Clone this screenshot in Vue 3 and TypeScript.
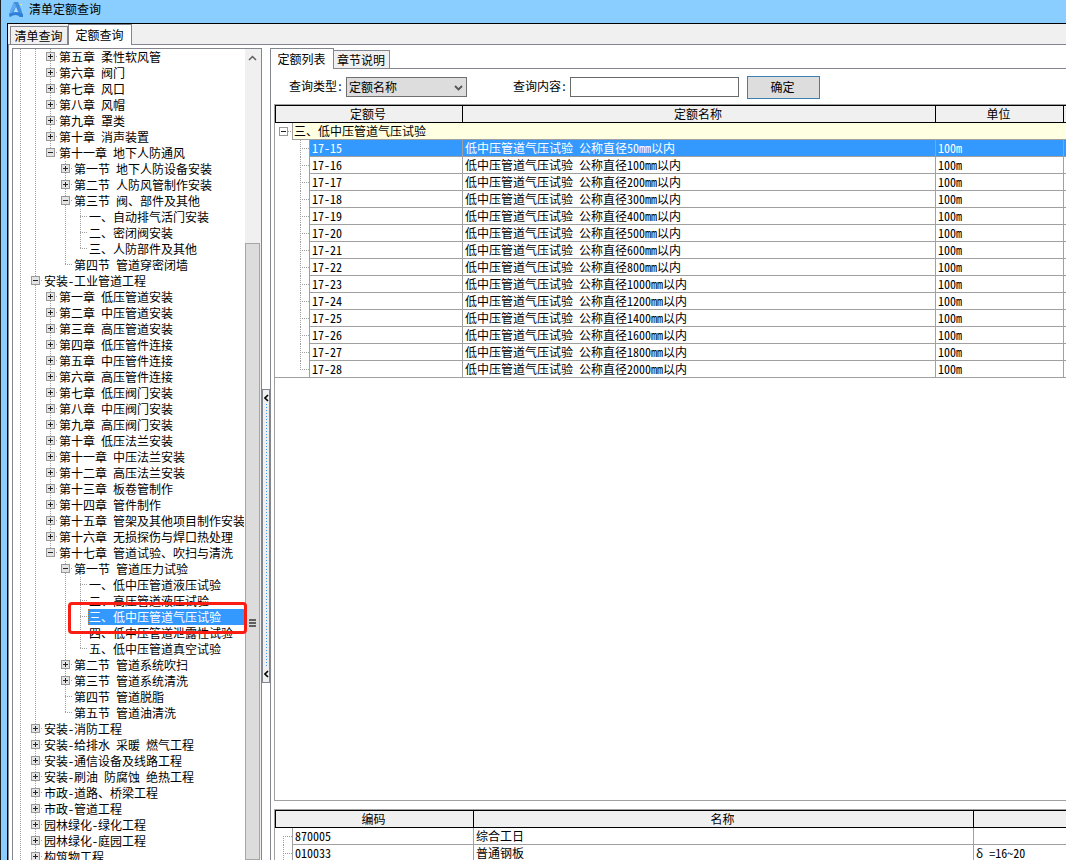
<script setup lang="ts">
import { computed, ref } from 'vue'

type Kind = 'open' | 'closed' | 'leaf'
interface Node { depth: number; text: string; kind: Kind }

const n = (depth: number, text: string, kind: Kind = 'closed'): Node => ({ depth, text, kind })

const nodes: Node[] = [
  n(2, '第五章 柔性软风管'),
  n(2, '第六章 阀门'),
  n(2, '第七章 风口'),
  n(2, '第八章 风帽'),
  n(2, '第九章 罩类'),
  n(2, '第十章 消声装置'),
  n(2, '第十一章 地下人防通风', 'open'),
  n(3, '第一节 地下人防设备安装'),
  n(3, '第二节 人防风管制作安装'),
  n(3, '第三节 阀、部件及其他', 'open'),
  n(4, '一、自动排气活门安装', 'leaf'),
  n(4, '二、密闭阀安装', 'leaf'),
  n(4, '三、人防部件及其他', 'leaf'),
  n(3, '第四节 管道穿密闭墙', 'leaf'),
  n(1, '安装-工业管道工程', 'open'),
  n(2, '第一章 低压管道安装'),
  n(2, '第二章 中压管道安装'),
  n(2, '第三章 高压管道安装'),
  n(2, '第四章 低压管件连接'),
  n(2, '第五章 中压管件连接'),
  n(2, '第六章 高压管件连接'),
  n(2, '第七章 低压阀门安装'),
  n(2, '第八章 中压阀门安装'),
  n(2, '第九章 高压阀门安装'),
  n(2, '第十章 低压法兰安装'),
  n(2, '第十一章 中压法兰安装'),
  n(2, '第十二章 高压法兰安装'),
  n(2, '第十三章 板卷管制作'),
  n(2, '第十四章 管件制作'),
  n(2, '第十五章 管架及其他项目制作安装'),
  n(2, '第十六章 无损探伤与焊口热处理'),
  n(2, '第十七章 管道试验、吹扫与清洗', 'open'),
  n(3, '第一节 管道压力试验', 'open'),
  n(4, '一、低中压管道液压试验', 'leaf'),
  n(4, '二、高压管道液压试验', 'leaf'),
  n(4, '三、低中压管道气压试验', 'leaf'),
  n(4, '四、低中压管道泄露性试验', 'leaf'),
  n(4, '五、低中压管道真空试验', 'leaf'),
  n(3, '第二节 管道系统吹扫'),
  n(3, '第三节 管道系统清洗'),
  n(3, '第四节 管道脱脂', 'leaf'),
  n(3, '第五节 管道油清洗', 'leaf'),
  n(1, '安装-消防工程'),
  n(1, '安装-给排水 采暖 燃气工程'),
  n(1, '安装-通信设备及线路工程'),
  n(1, '安装-刷油 防腐蚀 绝热工程'),
  n(1, '市政-道路、桥梁工程'),
  n(1, '市政-管道工程'),
  n(1, '园林绿化-绿化工程'),
  n(1, '园林绿化-庭园工程'),
  n(1, '构筑物工程'),
]

/* True when a later sibling exists at the given depth; the two outer levels run past the list's end. */
function continues(index: number, depth: number): boolean {
  if (depth <= 1) return true
  for (let i = index + 1; i < nodes.length; i++) {
    if (nodes[i].depth < depth) return false
    if (nodes[i].depth === depth) return true
  }
  return false
}

const tree = computed(() =>
  nodes.map((node, i) => ({
    ...node,
    guides: Array.from({ length: node.depth }, (_, d) => continues(i, d)),
    more: continues(i, node.depth),
  })),
)

const selectedNode = ref(35)
const selectedRow = ref(0)
const queryType = ref('定额名称')
const queryText = ref('')

const diameters = [50, 100, 200, 300, 400, 500, 600, 800, 1000, 1200, 1400, 1600, 1800, 2000]
const quotas = diameters.map((d, i) => ({
  code: `17-${15 + i}`,
  name: `低中压管道气压试验 公称直径${d}mm以内`,
  unit: '100m',
}))

const materials = [
  { code: '870005', name: '综合工日', spec: '' },
  { code: '010033', name: '普通钢板', spec: 'δ =16~20' },
]
</script>

<template>
  <div class="window">
    <header class="titlebar">
      <svg class="logo" viewBox="0 0 16 17" aria-hidden="true">
        <path d="M6 1 L10 1 L13 8 L15 15 L12 15 L8 6 L5 12 L2 16 L1 14 L3 8 Z" fill="#3f8ee0" />
        <path d="M6 1 L8 5 L4 12 L1 15 L3 8 Z" fill="#62aaf0" />
        <path d="M8 6 L10 12 L6 12 Z" fill="#b4deff" />
        <path d="M1 13 Q8 9 15 13 L15 16 L12 16 Q8 12 2 16 Z" fill="#2f7fd6" />
        <path d="M12 3 h2 v1 h-2z M13 4 h1 v1 h-1z" fill="#e9e36b" />
      </svg>
      <h1>清单定额查询</h1>
    </header>

    <div class="client">
      <div class="tabs outer" role="tablist">
        <button type="button" role="tab" class="tab" aria-selected="false">清单查询</button>
        <button type="button" role="tab" class="tab on" aria-selected="true">定额查询</button>
      </div>

      <main class="pane">
        <nav class="treebox" aria-label="定额章节">
          <ul class="tree">
            <li v-for="(node, i) in tree" :key="i" class="node">
              <span v-for="(line, d) in node.guides" :key="d" class="guide" :class="{ line }"></span>
              <span class="guide joint" :class="{ last: !node.more }">
                <button
                  v-if="node.kind !== 'leaf'"
                  type="button"
                  class="expander"
                  :class="node.kind"
                  :aria-label="node.text"
                  :aria-expanded="node.kind === 'open'"
                ></button>
              </span>
              <button type="button" class="label" :class="{ selected: i === selectedNode }" @click="selectedNode = i">
                {{ node.text }}
              </button>
              <span v-if="i === 35" class="mark"></span>
            </li>
          </ul>
          <div class="scrollbar">
            <button type="button" class="up" aria-label="向上">
              <svg viewBox="0 0 9 6" aria-hidden="true"><path d="M1 5 L4.500 1.500 L8 5" fill="none" stroke="#606060" stroke-width="1.500" /></svg>
            </button>
            <div class="thumb"><span class="grip"></span></div>
          </div>
        </nav>

        <div class="splitter">
          <div class="handle">
            <svg viewBox="0 0 5 8" aria-hidden="true"><path d="M4 1 L1 4 L4 7" fill="none" stroke="#000" stroke-width="1.600" /></svg>
            <span class="dots"></span>
            <svg viewBox="0 0 5 8" aria-hidden="true"><path d="M4 1 L1 4 L4 7" fill="none" stroke="#000" stroke-width="1.600" /></svg>
          </div>
        </div>

        <section class="right">
          <div class="tabs inner" role="tablist">
            <button type="button" role="tab" class="tab on" aria-selected="true">定额列表</button>
            <button type="button" role="tab" class="tab" aria-selected="false">章节说明</button>
          </div>

          <div class="content">
            <form class="query" @submit.prevent>
              <label for="qtype">查询类型:</label>
              <span class="combo">
                <select id="qtype" v-model="queryType">
                  <option>定额名称</option>
                  <option>定额号</option>
                </select>
                <svg viewBox="0 0 9 6" aria-hidden="true"><path d="M1 1 L4.500 4.500 L8 1" fill="none" stroke="#555" stroke-width="1.800" /></svg>
              </span>
              <label for="qtext" class="second">查询内容:</label>
              <input id="qtext" v-model="queryText" type="text" />
              <button type="submit" class="ok">确定</button>
            </form>

            <div class="grid upper">
              <table>
                <colgroup><col class="c-code" /><col /><col class="c-unit" /><col class="c-rest" /></colgroup>
                <thead>
                  <tr><th>定额号</th><th>定额名称</th><th>单位</th><th></th></tr>
                </thead>
                <tbody>
                  <tr>
                    <td colspan="4" class="first">
                      <div class="lead group">
                        <span class="stub root"><button type="button" class="expander open plain" aria-label="折叠" aria-expanded="true"></button></span>
                        <span class="cell">三、低中压管道气压试验</span>
                      </div>
                    </td>
                  </tr>
                  <tr v-for="(q, i) in quotas" :key="q.code" :class="{ picked: i === selectedRow }" @click="selectedRow = i">
                    <td class="first">
                      <div class="lead">
                        <span class="stub child" :class="{ last: i === quotas.length - 1 }"></span>
                        <span class="cell">{{ q.code }}</span>
                      </div>
                    </td>
                    <td>{{ q.name }}</td>
                    <td>{{ q.unit }}</td>
                    <td></td>
                  </tr>
                </tbody>
              </table>
            </div>

            <div class="grid lower">
              <table>
                <colgroup><col class="c-mat" /><col /><col class="c-spec" /></colgroup>
                <thead>
                  <tr><th>编码</th><th>名称</th><th></th></tr>
                </thead>
                <tbody>
                  <tr v-for="(m, i) in materials" :key="m.code">
                    <td class="first">
                      <div class="lead">
                        <span class="stub item" :class="{ start: i === 0 }"></span>
                        <span class="cell">{{ m.code }}</span>
                      </div>
                    </td>
                    <td>{{ m.name }}</td>
                    <td>{{ m.spec }}</td>
                  </tr>
                </tbody>
              </table>
            </div>
          </div>
        </section>
      </main>
    </div>
  </div>
</template>

<style>
body {
  margin: 0;
  overflow: hidden;
}
</style>

<style scoped>
* {
  box-sizing: border-box;
}
.window {
  --edge: #83868f;
  --line: #a0a0a0;
  --vdots: repeating-linear-gradient(to bottom, #a0a0a0 0 1px, transparent 1px 2px);
  --hdots: repeating-linear-gradient(to right, #a0a0a0 0 1px, transparent 1px 2px);
  display: flex;
  flex-direction: column;
  height: 100vh;
  overflow: hidden;
  padding-left: 6px;
  background: #8acdff;
  border-left: 1px solid #1e2226;
  color: #000;
  font: 12px/16px "Noto Sans CJK SC", sans-serif;
  font-feature-settings: "hwid";
}
button,
input,
select {
  margin: 0;
  padding: 0;
  border: 0;
  border-radius: 0;
  color: inherit;
  font: inherit;
  font-feature-settings: inherit;
}
.titlebar {
  display: flex;
  flex: none;
  align-items: center;
  gap: 5px;
  height: 23px;
  padding: 0 0 5px 1px;
}
.logo {
  width: 16px;
  height: 17px;
}
h1 {
  margin: 0;
  font-size: 12px;
  font-weight: 400;
}
.client {
  display: flex;
  flex: 1;
  flex-direction: column;
  min-height: 0;
  background: #f0f0f0;
  border-top: 1px solid #000;
  border-left: 1px solid #000;
}
.tabs {
  display: flex;
  flex: none;
  align-items: flex-end;
}
.tab {
  position: relative;
  flex: none;
  height: 18px;
  padding-right: 1px;
  background: #f0f0f0;
  border: 1px solid var(--edge);
  border-bottom: 0;
}
.tab.on {
  height: 21px;
  margin-bottom: -1px;
  padding-bottom: 1px;
  background: #fff;
}
.outer {
  height: 20px;
  padding-left: 2px;
}
.outer .tab {
  width: 58px;
}
.outer .tab.on {
  width: 64px;
}
.pane {
  display: flex;
  flex: 1;
  min-height: 0;
  padding: 3px 0 0 3px;
  background: #fff;
  border-top: 1px solid var(--edge);
  border-left: 1px solid var(--edge);
}

/* chapter tree */
.treebox {
  display: flex;
  flex: none;
  width: 250px;
  border: 1px solid var(--edge);
  border-bottom: 0;
}
.tree {
  flex: 1;
  min-width: 0;
  margin: 0;
  padding: 0 1px 0 0;
  list-style: none;
}
.node {
  position: relative;
  display: flex;
  height: 16px;
}
.guide {
  flex: none;
  width: 15px;
  height: 16px;
}
.guide.line {
  background: var(--vdots) 7px 0 / 1px 16px no-repeat;
}
.joint {
  padding: 3px 0 0 3px;
  background:
    var(--vdots) 7px 0 / 1px 16px no-repeat,
    var(--hdots) 7px 7px / 8px 1px no-repeat;
}
.joint.last {
  background:
    var(--vdots) 7px 0 / 1px 8px no-repeat,
    var(--hdots) 7px 7px / 8px 1px no-repeat;
}
.expander {
  display: block;
  width: 9px;
  height: 9px;
  border: 1px solid #989898;
  background: linear-gradient(#222, #222) 1px 3px / 5px 1px no-repeat #e4e4e4;
}
.expander.closed {
  background:
    linear-gradient(#222, #222) 1px 3px / 5px 1px no-repeat,
    linear-gradient(#222, #222) 3px 1px / 1px 5px no-repeat #e4e4e4;
}
.expander.plain {
  background-color: #fff;
}
.label {
  flex: 1;
  min-width: 0;
  padding-left: 1px;
  overflow: hidden;
  background: none;
  text-align: left;
  white-space: nowrap;
}
.label.selected {
  background: #3399ff;
  color: #fff;
  outline: 1px dotted #c07a30;
  outline-offset: -1px;
}
.mark {
  position: absolute;
  z-index: 2;
  top: -7px;
  right: -3px;
  bottom: -9px;
  left: 55px;
  border: 3px solid #fb1d12;
  border-radius: 4px;
  pointer-events: none;
}
.scrollbar {
  display: flex;
  flex: none;
  flex-direction: column;
  width: 16px;
  padding-right: 1px;
  background: #f0f0f0;
}
.up {
  display: grid;
  flex: none;
  place-items: center;
  height: 17px;
  margin-bottom: 177px;
  background: #f0f0f0;
}
.up svg {
  width: 9px;
  height: 6px;
}
.thumb {
  display: flex;
  flex: 1;
  justify-content: center;
  padding-top: 375px;
  background: #dcdcdc;
  border: 1px solid #a6a6a6;
}
.grip {
  width: 7px;
  height: 8px;
  background: repeating-linear-gradient(#606060 0 2px, transparent 2px 3px);
}

/* splitter */
.splitter {
  flex: none;
  width: 8px;
}
.handle {
  display: flex;
  flex-direction: column;
  align-items: center;
  height: 294px;
  margin-top: 341px;
  padding: 4px 0;
  background: #f0f0f0;
  border: 1px solid #83868f;
}
.handle svg {
  width: 5px;
  height: 8px;
}
.dots {
  flex: 1;
  width: 1px;
  margin: 2px 0;
  background: repeating-linear-gradient(#3399ff 0 1px, transparent 1px 3px);
}

/* right side */
.right {
  display: flex;
  flex: 1;
  flex-direction: column;
  min-width: 0;
}
.inner {
  height: 20px;
}
.inner .tab.on {
  width: 64px;
}
.inner .tab:not(.on) {
  width: 56px;
  border-left: 0;
}
.content {
  display: flex;
  flex: 1;
  flex-direction: column;
  min-height: 0;
  padding-left: 3px;
  border-top: 1px solid var(--edge);
  border-left: 1px solid var(--edge);
}
.query {
  display: flex;
  flex: none;
  align-items: center;
  height: 35px;
  padding: 1px 0 0 15px;
}
.query label {
  width: 57px;
  padding-bottom: 2px;
}
.query .second {
  margin-left: 46px;
}
.combo {
  position: relative;
}
.combo select {
  display: block;
  width: 121px;
  height: 20px;
  padding-left: 2px;
  appearance: none;
  background: #ddd;
  border: 1px solid #707070;
}
.combo svg {
  position: absolute;
  top: 8px;
  right: 4px;
  width: 9px;
  height: 6px;
  pointer-events: none;
}
.query input {
  width: 169px;
  height: 20px;
  padding: 0 3px;
  background: #fff;
  border: 1px solid #6a6a6a;
}
.query .ok {
  width: 73px;
  height: 23px;
  margin-left: 8px;
  padding-right: 2px;
  background: #ddd;
  border: 1px solid #3c7fb1;
}
.grid {
  border-top: 1px solid var(--line);
  border-left: 1px solid var(--line);
}
.upper {
  flex: 1;
  min-height: 0;
  margin-bottom: 8px;
  border-bottom: 1px solid var(--line);
}
.lower {
  flex: none;
  height: 51px;
  overflow: hidden;
}
table {
  width: 100%;
  border-collapse: separate;
  border-spacing: 0;
  table-layout: fixed;
}
.c-code {
  width: 188px;
}
.c-unit {
  width: 128px;
}
.c-rest {
  width: 2px;
}
.c-mat {
  width: 199px;
}
.c-spec {
  width: 92px;
}
th {
  height: 18px;
  padding: 0 2px 0 0;
  background: #f0f0f0;
  border: solid #000;
  border-width: 1px 1px 1px 0;
  font-weight: 400;
  line-height: 16px;
}
th:first-child {
  border-left-width: 1px;
}
th:last-child {
  padding: 0;
  border-right-width: 0;
}
td {
  height: 17px;
  padding: 0 0 0 2px;
  overflow: hidden;
  border: solid var(--line);
  border-width: 0 1px 1px 0;
  line-height: 16px;
  white-space: nowrap;
}
td:last-child {
  border-right: 0;
}
td:empty {
  padding: 0;
}
td.first {
  padding: 0;
  border-bottom: 0;
}
.upper tr:last-child td.first {
  border-bottom: 1px solid var(--line);
}
.upper tr:last-child .cell {
  height: 16px;
  border-bottom: 0;
}
.upper tr:last-child .lead {
  height: 16px;
}
.lead {
  display: flex;
  height: 17px;
}
.cell {
  flex: 1;
  height: 17px;
  padding-left: 2px;
  border-bottom: 1px solid var(--line);
  border-left: 1px solid var(--line);
}
.group .cell {
  padding-left: 1px;
  background: #ffffe1;
}
.picked td:not(.first),
.picked .cell {
  background: #3399ff;
  color: #fff;
}
.stub {
  flex: none;
  width: 17px;
}
.root {
  padding: 4px 0 0 4px;
  background: var(--hdots) 13px 8px / 4px 1px no-repeat;
}
.child {
  width: 34px;
  background:
    var(--vdots) 25px 0 / 1px 17px no-repeat,
    var(--hdots) 25px 8px / 9px 1px no-repeat;
}
.child.last {
  background:
    var(--vdots) 25px 0 / 1px 9px no-repeat,
    var(--hdots) 25px 8px / 9px 1px no-repeat;
}
.item {
  background:
    var(--vdots) 8px 0 / 1px 17px no-repeat,
    var(--hdots) 8px 8px / 9px 1px no-repeat;
}
.item.start {
  background:
    var(--vdots) 8px 8px / 1px 9px no-repeat,
    var(--hdots) 8px 8px / 9px 1px no-repeat;
}
</style>
